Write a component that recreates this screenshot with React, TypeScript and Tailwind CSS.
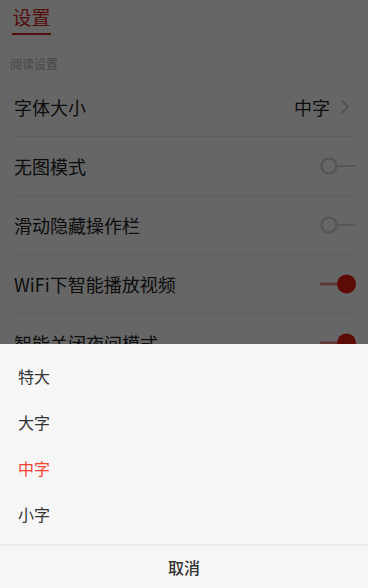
import React from "react";

const font = { fontFamily: '"Noto Sans CJK SC", "Noto Sans", sans-serif' };

function Toggle({ on }: { on: boolean }) {
  if (on) {
    return (
      <svg className="-mr-[2px]" width="42" height="22" viewBox="0 0 42 22">
        <line x1="6" y1="11" x2="26" y2="11" stroke="#f28a80" strokeWidth="3" />
        <circle cx="32.5" cy="11" r="9.5" fill="#e81c10" />
      </svg>
    );
  }
  return (
    <svg className="-mr-[2px]" width="42" height="22" viewBox="0 0 42 22">
      <circle cx="15" cy="11" r="7.5" fill="none" stroke="#cfcfcf" strokeWidth="2.2" />
      <line x1="23.5" y1="11" x2="41" y2="11" stroke="#d6d6d6" strokeWidth="2" />
    </svg>
  );
}

function Row({ label, children }: { label: string; children: React.ReactNode }) {
  return (
    <div className="mx-[14px] flex h-[59px] items-center justify-between border-b border-[#ececec]">
      <span className="text-[18px] text-[#222]">{label}</span>
      <div className="flex items-center">{children}</div>
    </div>
  );
}

export default function App() {
  const options = ["特大", "大字", "中字", "小字"];
  return (
    <div className="relative h-[588px] w-[368px] overflow-hidden bg-white" style={font}>
      {/* Header */}
      <div className="flex h-[36px] items-end border-b border-[#f0f0f0] px-[12px]">
        <div className="flex flex-col items-center">
          <span className="text-[19px] leading-none text-[#d3261a]">设置</span>
          <div className="mt-[7px] h-[2px] w-[39px] bg-[#d3261a]" />
        </div>
      </div>

      {/* Section */}
      <div className="px-[10px] pt-[20px] pb-[6px] text-[12px] leading-[16px] text-[#b0b0b0]">阅读设置</div>

      <Row label="字体大小">
        <span className="text-[18px] text-[#222]">中字</span>
        <svg className="ml-[11px] mr-[5px]" width="8" height="14" viewBox="0 0 8 14">
          <path d="M1 1 L7 7 L1 13" fill="none" stroke="#b0b0b0" strokeWidth="1.2" />
        </svg>
      </Row>
      <Row label="无图模式">
        <Toggle on={false} />
      </Row>
      <Row label="滑动隐藏操作栏">
        <Toggle on={false} />
      </Row>
      <Row label="WiFi下智能播放视频">
        <Toggle on />
      </Row>
      <Row label="智能关闭夜间模式">
        <Toggle on />
      </Row>

      {/* Overlay */}
      <div className="absolute inset-0 bg-black/60" />

      {/* Bottom sheet */}
      <div className="absolute bottom-0 left-0 right-0 flex h-[244px] flex-col bg-[#f6f6f6]">
        <div className="flex flex-col pt-[9px]">
          {options.map((o) => (
            <div
              key={o}
              className={`flex h-[46px] items-center px-[18px] text-[16px] ${
                o === "中字" ? "text-[#f2432f]" : "text-[#333]"
              }`}
            >
              {o}
            </div>
          ))}
        </div>
        <div className="mt-[7px] h-[2px] bg-[#ebebeb]" />
        <div className="flex flex-1 items-center justify-center text-[16px] font-medium text-[#333]">取消</div>
      </div>
    </div>
  );
}
